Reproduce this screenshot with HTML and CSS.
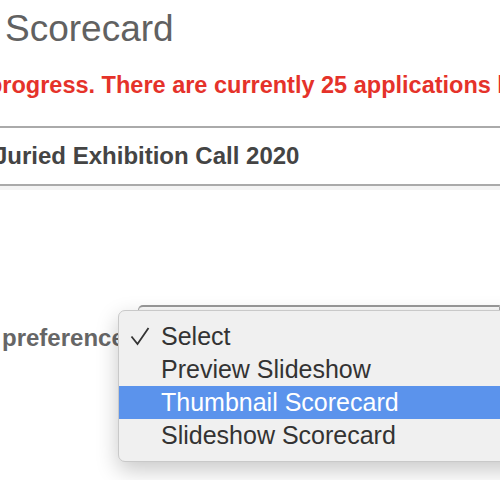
FILE: index.html
```html
<!DOCTYPE html>
<html lang="en">

    <head>
        <meta charset="UTF-8">
        <meta name="viewport" content="width=device-width, initial-scale=1.0">
        <title>Scorecard</title>
        <link rel="stylesheet" href="styles.css">
    </head>

    <body>
        <h1 class="title">Scorecard</h1>

        <p class="notice">progress. There are currently 25 applications left to score.</p>

        <div class="call-box">
            <span class="call-name">Juried Exhibition Call 2020</span>
        </div>

        <div class="form-row">
            <label class="field-label">preference</label>

            <div class="select-wrap">
                <div class="select-box"></div>

                <!-- open native popup menu -->
                <ul class="popup-menu">
                    <li class="menu-item checked">
                        <svg class="check" width="20" height="19" viewBox="0 0 20 19">
                            <polyline points="1.5,9.5 7.5,17 18.5,1" fill="none" stroke="#333" stroke-width="1.8"/>
                        </svg>
                        Select
                    </li>
                    <li class="menu-item">Preview Slideshow</li>
                    <li class="menu-item active">Thumbnail Scorecard</li>
                    <li class="menu-item">Slideshow Scorecard</li>
                </ul>
            </div>
        </div>
    </body>

</html>
```

FILE: styles.css
```css
body {
    margin: 0;
    font-family: 'Liberation Sans', Arial, sans-serif;
    overflow: hidden;
    width: 500px;
    height: 480px;
    background: white;
}

.title {
    margin: 8px 0 0 5px;
    font-size: 37px;
    font-weight: normal;
    line-height: 42px;
    color: #616161;
}

.notice {
    margin: 22px 0 0 -12px;
    font-size: 23.5px;
    font-weight: bold;
    line-height: 26px;
    color: #e5322a;
    white-space: nowrap;
}

.call-box {
    margin-top: 28px;
    border-top: 2px solid #aaa;
    border-bottom: 2px solid #aaa;
    padding: 14px 0;
    white-space: nowrap;
    box-shadow: 0 4px 0 #f4f4f4;
}

.call-name {
    display: block;
    margin-left: -6px;
    font-size: 24px;
    font-weight: bold;
    line-height: 28px;
    color: #444;
}

.form-row {
    display: flex;
    align-items: flex-start;
    margin-top: 119px;
}

.field-label {
    width: 136px;
    flex: none;
    margin-top: 20px;
    padding-left: 2px;
    font-size: 24px;
    font-weight: bold;
    line-height: 26px;
    color: #666;
    white-space: nowrap;
}

.select-wrap {
    position: relative;
    flex: 1;
}

.select-box {
    height: 40px;
    border: 1px solid #a8a8a8;
    border-top: 2px solid #999;
    border-radius: 5px 0 0 5px;
    background: linear-gradient(#fafafa, #e8e8e8);
}

.popup-menu {
    position: absolute;
    left: -20px;
    top: 5px;
    width: 420px;
    margin: 0;
    padding: 9px 0;
    list-style: none;
    background: #f0f0f0;
    border: 1px solid #c9c9c9;
    border-radius: 7px;
    box-shadow: 0 8px 22px rgba(0, 0, 0, 0.22);
}

.menu-item {
    position: relative;
    height: 33px;
    padding-left: 42px;
    font-size: 25px;
    line-height: 33px;
    color: #333;
}

.menu-item.active {
    background: #5b93ec;
    color: white;
}

.check {
    position: absolute;
    left: 11px;
    top: 7px;
}
```
